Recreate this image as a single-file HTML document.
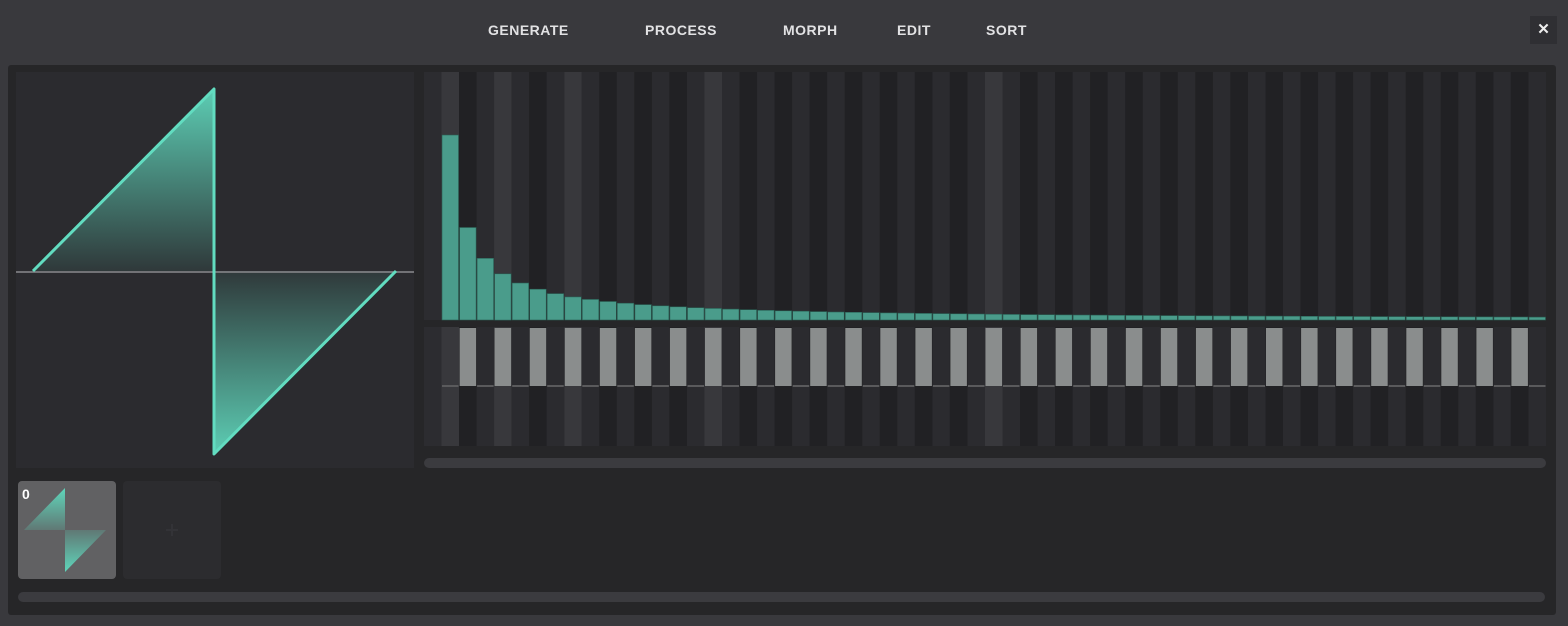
<!DOCTYPE html>
<html><head><style>
body{margin:0;width:1568px;height:626px;background:#39393d;overflow:hidden;font-family:"Liberation Sans",sans-serif;position:relative}
.nav{position:absolute;top:22px;font-weight:bold;font-size:14px;color:#e2e2e4;letter-spacing:.5px}
.box{position:absolute}
</style></head><body>
<div class="nav" style="left:488px">GENERATE</div>
<div class="nav" style="left:645px">PROCESS</div>
<div class="nav" style="left:783px">MORPH</div>
<div class="nav" style="left:897px">EDIT</div>
<div class="nav" style="left:986px">SORT</div>
<div class="box" style="left:1530px;top:16px;width:27px;height:28px;background:#2f2f33;color:#eee;font-weight:bold;font-size:15px;text-align:center;line-height:28px">✕</div>
<div class="box" style="left:8px;top:65px;width:1548px;height:550px;background:#262628;border-radius:3px"></div>
<div class="box" style="left:16px;top:72px;width:398px;height:396px;background:#2b2b2f"></div>
<svg class="box" style="left:0;top:0" width="1568" height="626">
<defs>
<linearGradient id="g1" x1="0" y1="89" x2="0" y2="271" gradientUnits="userSpaceOnUse"><stop offset="0" stop-color="#5fd6bb" stop-opacity=".95"/><stop offset="1" stop-color="#5fd6bb" stop-opacity=".08"/></linearGradient>
<linearGradient id="g2" x1="0" y1="454" x2="0" y2="271" gradientUnits="userSpaceOnUse"><stop offset="0" stop-color="#5fd6bb" stop-opacity=".95"/><stop offset="1" stop-color="#5fd6bb" stop-opacity=".08"/></linearGradient>
<linearGradient id="t1" x1="0" y1="488" x2="0" y2="530" gradientUnits="userSpaceOnUse"><stop offset="0" stop-color="#5fd6bb"/><stop offset="1" stop-color="#5fd6bb" stop-opacity=".2"/></linearGradient>
<linearGradient id="t2" x1="0" y1="572" x2="0" y2="530" gradientUnits="userSpaceOnUse"><stop offset="0" stop-color="#5fd6bb"/><stop offset="1" stop-color="#5fd6bb" stop-opacity=".2"/></linearGradient>
</defs>
<polygon points="33,271 214,89 214,271" fill="url(#g1)"/>
<polygon points="214,271 214,454 396,271" fill="url(#g2)"/>
<line x1="16" y1="272" x2="414" y2="272" stroke="#8a8a8e" stroke-width="1.5"/>
<polyline points="33,271 214,89 214,454 396,271" fill="none" stroke="#62dcc0" stroke-width="3" stroke-linejoin="round"/>
<g id="spec"></g>
<rect x="424" y="458" width="1122" height="10" rx="5" fill="#3b3b3f"/>
<rect x="18" y="481" width="98" height="98" rx="4" fill="#616163"/>
<rect x="123" y="481" width="98" height="98" rx="4" fill="#2c2c2f"/>
<path d="M172 524v12M166 530h12" stroke="#333337" stroke-width="2"/>
<polygon points="24,530 65,488 65,530" fill="url(#t1)"/>
<polygon points="65,530 65,572 106,530" fill="url(#t2)"/>
<text x="22" y="499" fill="#fff" font-weight="bold" font-size="14" font-family="Liberation Sans">0</text>
<rect x="18" y="592" width="1527" height="10" rx="5" fill="#3b3b3f"/>
</svg>
<script>
var g=document.getElementById('spec'),s='',p=1122/64;
var light={1:1,4:1,8:1,16:1,32:1};
for(var k=0;k<64;k++){
 var x=424+k*p,c=light[k]?'#38383c':(k%2?'#2b2b2f':'#212124');
 if(k===0)c='#2c2c30';
 s+='<rect x="'+x.toFixed(1)+'" y="72" width="'+p.toFixed(1)+'" height="374" fill="'+c+'"/>';
}
s+='<rect x="424" y="320" width="1122" height="7" fill="#262628"/>';
for(var k=1;k<64;k++){
 var x=424+k*p,h=185/k;if(h<2)h=2;
 s+='<rect x="'+(x+.5).toFixed(1)+'" y="'+(320-h).toFixed(1)+'" width="'+(p-1).toFixed(1)+'" height="'+h.toFixed(1)+'" fill="#4a9c8b" stroke="#2a5e53" stroke-width=".6"/>';
 if(k%2===0) s+='<rect x="'+(x+.5).toFixed(1)+'" y="328" width="'+(p-1).toFixed(1)+'" height="58" fill="#8a8d8d"/>';
 else s+='<rect x="'+(x+.5).toFixed(1)+'" y="385" width="'+(p-1).toFixed(1)+'" height="2" fill="#5a5a5c"/>';
}
g.innerHTML=s;
</script>
</body></html>
